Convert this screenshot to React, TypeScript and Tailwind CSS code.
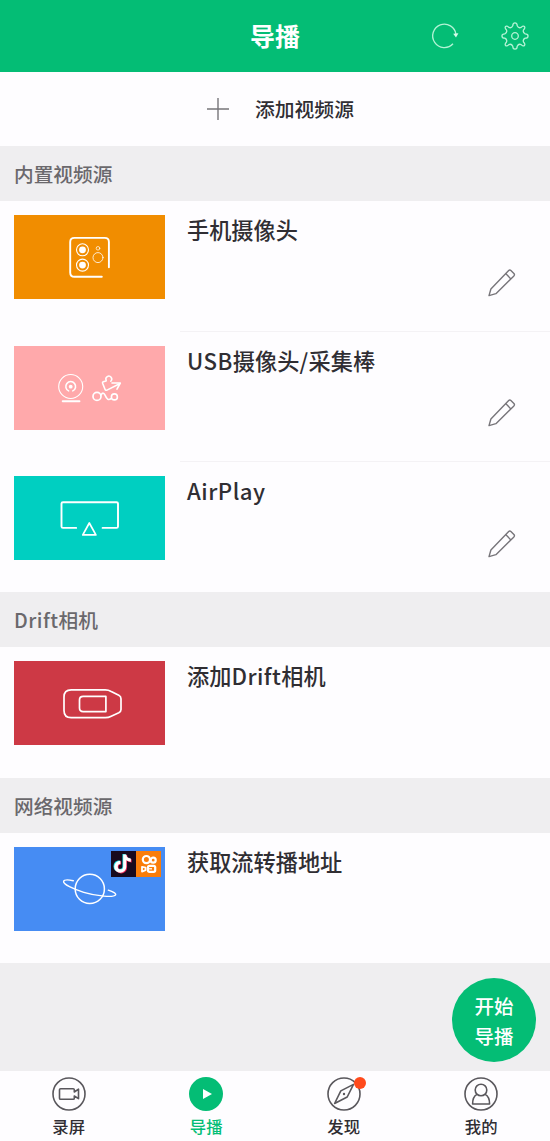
import type { ReactNode } from "react";

const fontStack =
  "font-['Noto_Sans_CJK_SC','Noto_Sans',sans-serif]";

function RefreshIcon() {
  return (
    <svg width="30" height="30" viewBox="0 0 30 30" fill="none">
      <path d="M23 22.8A11.7 11.7 0 1 1 26 13.4" stroke="#b4f3d5" strokeWidth="1.3" />
      <path d="M23.2 12.8L28.4 12.2L26 16.6Z" fill="#d8fbea" />
    </svg>
  );
}

function GearIcon() {
  return (
    <svg width="30" height="30" viewBox="-15 -15 30 30" fill="none" stroke="#b4f3d5" strokeWidth="1.3" strokeLinejoin="round">
      <path d="M-2.2 -10.2C-2.2 -14 2.2 -14 2.2 -10.2C3 -8.6 4.7 -7.9 6.2 -8.6C8.8 -11.4 11.4 -8.8 8.6 -6.2C7.9 -4.7 8.6 -3 10.2 -2.2C14 -2.2 14 2.2 10.2 2.2C8.6 3 7.9 4.7 8.6 6.2C11.4 8.8 8.8 11.4 6.2 8.6C4.7 7.9 3 8.6 2.2 10.2C2.2 14 -2.2 14 -2.2 10.2C-3 8.6 -4.7 7.9 -6.2 8.6C-8.8 11.4 -11.4 8.8 -8.6 6.2C-7.9 4.7 -8.6 3 -10.2 2.2C-14 2.2 -14 -2.2 -10.2 -2.2C-8.6 -3 -7.9 -4.7 -8.6 -6.2C-11.4 -8.8 -8.8 -11.4 -6.2 -8.6C-4.7 -7.9 -3 -8.6 -2.2 -10.2Z" />
      <circle r="3.3" />
    </svg>
  );
}

function PencilIcon() {
  return (
    <svg width="30" height="30" viewBox="0 0 30 30" fill="none" stroke="#77757a" strokeWidth="1.4" strokeLinejoin="round">
      <path d="M2 27.6L3.9 21L21.7 2.5Q22.8 1.4 23.9 2.5L26.9 5.5Q28 6.7 26.9 7.9L8.9 25.7Z" />
      <path d="M18.7 5.6L23.9 10.9" />
    </svg>
  );
}

function Art({ children }: { children: ReactNode }) {
  return (
    <svg className="block h-full w-full" viewBox="0 0 151 84" fill="none" stroke="#fff" strokeWidth="1.7" strokeLinecap="round" strokeLinejoin="round">
      {children}
    </svg>
  );
}

function PhoneCameraArt() {
  return (
    <Art>
      <path d="M87.8 61.8H60.5Q56.2 61.8 56.2 57.5V27Q56.2 22.9 60.5 22.9H90.7Q94.9 22.9 94.9 27V52.3" strokeWidth="1.9" />
      <circle cx="68.5" cy="34.8" r="6" strokeWidth="1.1" />
      <circle cx="68.5" cy="34.8" r="3.4" fill="#fff" stroke="none" />
      <circle cx="68.5" cy="50.1" r="6" strokeWidth="1.1" />
      <circle cx="68.5" cy="50.1" r="3.4" fill="#fff" stroke="none" />
      <circle cx="84" cy="33.3" r="1.8" strokeWidth="0.7" />
      <circle cx="84" cy="42.6" r="5" strokeWidth="0.8" />
    </Art>
  );
}

function UsbArt() {
  return (
    <Art>
      <circle cx="56.7" cy="40.5" r="12" strokeWidth="1.1" />
      <path d="M54.6 44.9A4.9 4.9 0 1 1 58.8 44.9" strokeWidth="1.6" />
      <circle cx="56.7" cy="40.7" r="1.9" fill="#fff" stroke="none" />
      <path d="M48.7 55.3H65.5" strokeWidth="1.9" />
      <circle cx="83" cy="50.4" r="4" />
      <path d="M87 49C88.6 46.4 90 46.6 91.2 49.4C92.6 52.8 94.4 54.8 97 52.6" strokeWidth="1.6" />
      <circle cx="100.4" cy="50.9" r="3" strokeWidth="1.6" />
      <path d="M92 34.9L89.2 35.7Q88.2 36.1 88.6 37.3L91 43.3Q91.6 44.8 93 44.1L104.6 38.2" strokeWidth="1.6" />
      <path d="M92.2 34.4A2.9 2.9 0 1 1 96.8 35.2" strokeWidth="1.5" />
      <path d="M98 37H106.3L103 43.2" strokeWidth="1.6" />
    </Art>
  );
}

function AirPlayArt() {
  return (
    <Art>
      <path d="M62.2 51.9H49Q47.5 51.9 47.5 50.4V27.6Q47.5 26.2 49 26.2H102.5Q104 26.2 104 27.6V50.4Q104 51.9 102.5 51.9H88.6" strokeWidth="1.9" />
      <path d="M75.3 47L81.9 58.9H68.8Z" />
    </Art>
  );
}

function DriftArt() {
  return (
    <Art>
      <path d="M57.2 28.9H91.2Q94.5 28.9 97.2 30.5L104.8 34.3Q107 35.4 107 37.8V48.4Q107 50.5 104.8 51.8L97.2 55.2Q94.5 56.7 91.2 56.7H57.2Q50 56.7 50 49.5V36.1Q50 28.9 57.2 28.9Z" />
      <path d="M69.2 35.4H91.9V50.6H69.2Q65.5 50.6 65.5 47V39Q65.5 35.4 69.2 35.4Z" />
    </Art>
  );
}

function PlanetArt() {
  return (
    <Art>
      <circle cx="75.8" cy="41.9" r="14.6" strokeWidth="1.5" />
      <path d="M59.3 33.7C53.7 32.5 50 33 49.6 34.4C48.8 37.2 59.3 42.1 69.8 45.3C82.8 49.2 99.6 50.8 101.6 47.9C102.4 46.7 99.3 44.8 94.3 43.2" strokeWidth="1.4" />
    </Art>
  );
}

const note = "M14.7 4.2H11.8V15.6A2.5 2.5 0 1 1 9.2 13V10A5.6 5.6 0 1 0 14.7 15.6V9.7A7 7 0 0 0 18.9 11V8A4.2 4.2 0 0 1 14.7 4.2Z";

function PlatformBadges() {
  return (
    <div className="absolute right-[4px] top-[4px] flex h-[26px]">
      <svg width="25" height="26" viewBox="0 0 25 26" className="bg-[#180a1e]">
        <g transform="translate(-1 -1) scale(1.08)">
          <path d={note} transform="translate(-0.3 -0.6)" fill="#20dfe2" />
          <path d={note} transform="translate(1.1 0.5)" fill="#f22b58" />
          <path d={note} transform="translate(0.4 -0.1)" fill="#fff" />
        </g>
      </svg>
      <svg width="25" height="26" viewBox="0 0 25 26" className="bg-[#fa7d0a]" fill="none" stroke="#fff" strokeWidth="2.2">
        <circle cx="10.4" cy="8.6" r="3.6" />
        <circle cx="17.2" cy="9.2" r="2.5" />
        <path d="M6 15.8V20.6L9.6 19.2V16.6Z" strokeWidth="1.8" strokeLinejoin="round" />
        <rect x="12" y="14.8" width="7.2" height="6" rx="1.5" strokeWidth="2.2" />
        <path d="M12.5 17.8H16" strokeWidth="1.3" />
      </svg>
    </div>
  );
}

function Latin({ children }: { children: ReactNode }) {
  return <span className="tracking-[0.5px]">{children}</span>;
}

function SectionTitle({ children }: { children: ReactNode }) {
  return (
    <h2 className="flex h-[55px] shrink-0 items-center bg-[#efeef0] pl-[14px] text-[19.7px] font-medium text-[#6a686c]">
      <span>{children}</span>
    </h2>
  );
}

type SourceProps = {
  title: ReactNode;
  color: string;
  art: ReactNode;
  height?: string;
  editable?: boolean;
  divider?: boolean;
  badges?: boolean;
};

function SourceRow({ title, color, art, height = "h-[130px]", editable, divider, badges }: SourceProps) {
  return (
    <div className={`flex shrink-0 pl-[14px] ${height}`}>
      <div className={`relative mt-[14px] h-[84px] w-[151px] shrink-0 ${color}`}>
        {art}
        {badges && <PlatformBadges />}
      </div>
      <div className={`ml-[15px] flex flex-1 flex-col justify-between pl-[7px] pr-[33px] ${divider ? "border-b border-[#f4f2f5]" : ""}`}>
        <h3 className="mt-[12px] whitespace-nowrap text-[22.2px] font-medium leading-[32px] text-[#302e33]">{title}</h3>
        {editable && (
          <div className="mb-[33px] self-end">
            <PencilIcon />
          </div>
        )}
      </div>
    </div>
  );
}

function NavItem({ label, active, dot, children }: { label: string; active?: boolean; dot?: boolean; children: ReactNode }) {
  return (
    <a className={`flex flex-1 flex-col items-center pt-[6px] ${active ? "text-[#04bd75]" : "text-[#302e33]"}`}>
      <div className="relative">
        <svg width="34" height="34" viewBox="0 0 34 34" fill="none" stroke="#59575c" strokeWidth="1.6" strokeLinejoin="round" className="block">
          {children}
        </svg>
        {dot && <span className="absolute -right-[5.5px] top-0 h-[12px] w-[12px] rounded-full bg-[#ff4a1c]" />}
      </div>
      <span className="mt-[3px] text-[16.4px] font-medium leading-[24px]">{label}</span>
    </a>
  );
}

export default function App() {
  return (
    <div className={`flex h-[1141px] w-[550px] flex-col overflow-hidden bg-[#fefdff] ${fontStack}`}>
      <header className="grid h-[72px] shrink-0 grid-cols-[1fr_auto_1fr] items-center bg-[#04bd75]">
        <span />
        <h1 className="text-[25px] font-bold text-white">导播</h1>
        <div className="flex justify-end gap-[40px] pr-[20px]">
          <RefreshIcon />
          <GearIcon />
        </div>
      </header>

      <button className="flex h-[74px] shrink-0 items-center pl-[206px] text-[19.8px] font-medium text-[#302e33]">
        <svg width="24" height="24" viewBox="0 0 24 24" stroke="#77757a" strokeWidth="1.4">
          <path d="M12 1V23M1 12H23" />
        </svg>
        <span className="ml-[25px]">添加视频源</span>
      </button>

      <SectionTitle>内置视频源</SectionTitle>
      <SourceRow title="手机摄像头" color="bg-[#f18d00]" art={<PhoneCameraArt />} editable divider height="h-[131px]" />
      <SourceRow title={<><Latin>USB</Latin>摄像头<Latin>/</Latin>采集棒</>} color="bg-[#ffa9ab]" art={<UsbArt />} editable divider />
      <SourceRow title={<Latin>AirPlay</Latin>} color="bg-[#00cfc1]" art={<AirPlayArt />} editable />

      <SectionTitle><Latin>Drift</Latin>相机</SectionTitle>
      <SourceRow title={<>添加<Latin>Drift</Latin>相机</>} color="bg-[#cd3945]" art={<DriftArt />} height="h-[131px]" />

      <SectionTitle>网络视频源</SectionTitle>
      <SourceRow title="获取流转播地址" color="bg-[#468cf3]" art={<PlanetArt />} badges />

      <div className="flex flex-1 items-start justify-end bg-[#efeef0] pr-[14px] pt-[15px]">
        <button className="flex h-[84px] w-[84px] flex-col items-center justify-center rounded-full bg-[#04bd75] pt-px text-[19.5px] font-medium leading-[30px] text-white">
          <span>开始</span>
          <span>导播</span>
        </button>
      </div>

      <nav className="flex h-[70px] shrink-0">
        <NavItem label="录屏">
          <circle cx="17" cy="17" r="16" />
          <path d="M8.6 11.7H21.2Q22.3 11.7 22.3 12.8V15L26.5 12.1V21.7L22.3 19V21.2Q22.3 22.3 21.2 22.3H8.6Q7.5 22.3 7.5 21.2V12.8Q7.5 11.7 8.6 11.7Z" />
        </NavItem>
        <NavItem label="导播" active>
          <circle cx="17" cy="17" r="17" fill="#04bd75" stroke="none" />
          <path d="M14 12L23 17L14 22Z" fill="#fff" stroke="none" />
        </NavItem>
        <NavItem label="发现" dot>
          <circle cx="17" cy="17" r="16" />
          <path d="M26.5 7.4L20.2 20L7.6 26.5L13.8 13.9Z" />
          <circle cx="17" cy="17" r="1.2" fill="#59575c" stroke="none" />
        </NavItem>
        <NavItem label="我的">
          <circle cx="17" cy="17" r="16" />
          <circle cx="17" cy="13" r="5.8" />
          <path d="M13 17.4C9.8 19 8.6 22 8.6 27H25.6C25.6 22 24.3 19 21.1 17.4" />
        </NavItem>
      </nav>
    </div>
  );
}
